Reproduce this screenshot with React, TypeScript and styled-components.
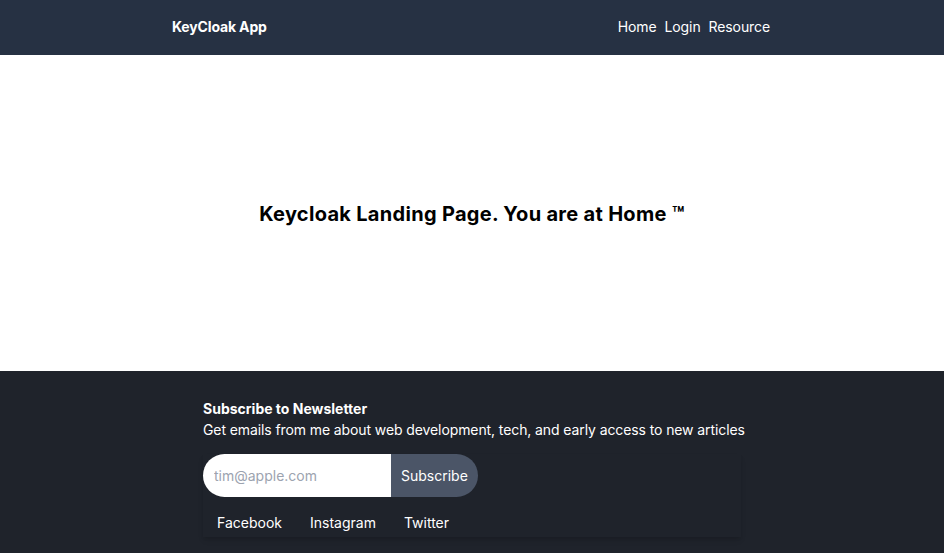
import React, { FC } from 'react';
import styled, { createGlobalStyle } from 'styled-components';

const GlobalStyle = createGlobalStyle`
  html, body {
    margin: 0;
    padding: 0;
    background: #ffffff;
    font-family: Inter, 'Noto Sans', sans-serif;
    -webkit-font-smoothing: antialiased;
  }
  * {
    box-sizing: border-box;
  }
`;

const links = ['Home', 'Login', 'Resource'];
const socials = ['Facebook', 'Instagram', 'Twitter'];

const Header: FC = () => (
  <Nav>
    <NavInner>
      <Brand>KeyCloak App</Brand>
      <NavLinks>
        {links.map((link) => (
          <NavLink href="#" key={link}>
            {link}
          </NavLink>
        ))}
      </NavLinks>
    </NavInner>
  </Nav>
);

const Footer: FC = () => (
  <FooterBar>
    <FooterInner>
      <FooterTitle>Subscribe to Newsletter</FooterTitle>
      <FooterText>Get emails from me about web development, tech, and early access to new articles</FooterText>
      <Card>
        <Form onSubmit={(e) => e.preventDefault()}>
          <EmailInput placeholder="tim@apple.com" type="email" />
          <SubscribeButton type="submit">Subscribe</SubscribeButton>
        </Form>
        <Socials>
          {socials.map((social) => (
            <SocialLink href="#" key={social}>
              {social}
            </SocialLink>
          ))}
        </Socials>
      </Card>
    </FooterInner>
  </FooterBar>
);

const App: FC = () => (
  <Page>
    <GlobalStyle />
    <Header />
    <Main>
      <Title>Keycloak Landing Page. You are at Home ™</Title>
    </Main>
    <Footer />
  </Page>
);

const Page = styled.div`
  display: flex;
  flex-direction: column;
  min-height: 553px;
`;

const Nav = styled.nav`
  background-color: #263143;
  height: 55px;
`;

const NavInner = styled.div`
  align-items: center;
  display: flex;
  height: 100%;
  justify-content: space-between;
  margin: 0 auto;
  max-width: 600px;
  padding-bottom: 3px;
`;

const Brand = styled.span`
  color: #ffffff;
  font-size: 14px;
  font-weight: 700;
  letter-spacing: -0.15px;
`;

const NavLinks = styled.div`
  display: flex;
  gap: 8px;
  padding-right: 2px;
`;

const NavLink = styled.a`
  color: #ffffff;
  font-size: 14px;
  letter-spacing: -0.1px;
  text-decoration: none;
`;

const Main = styled.main`
  align-items: center;
  display: flex;
  height: 316px;
  justify-content: center;
  padding-top: 2px;
`;

const Title = styled.h1`
  color: #000000;
  font-size: 20px;
  font-weight: 700;
  letter-spacing: 0.3px;
  margin: 0;
`;

const FooterBar = styled.footer`
  background-color: #1f232b;
  flex: 1;
  padding-top: 28px;
`;

const FooterInner = styled.div`
  color: #ffffff;
  margin: 0 auto;
  width: 538px;
`;

const FooterTitle = styled.p`
  font-size: 14px;
  font-weight: 700;
  line-height: 20px;
  margin: 0;
`;

const FooterText = styled.p`
  font-size: 14px;
  letter-spacing: -0.1px;
  line-height: 20px;
  margin: 1px 0 0;
  white-space: nowrap;
`;

const Card = styled.div`
  box-shadow: 0 4px 6px -1px rgba(0, 0, 0, 0.12), 0 2px 4px -1px rgba(0, 0, 0, 0.08);
  margin-top: 14px;
  padding-bottom: 4px;
`;

const Form = styled.form`
  display: flex;
`;

const EmailInput = styled.input`
  background: #ffffff;
  border: none;
  border-radius: 22px 0 0 22px;
  color: #374151;
  font-family: inherit;
  font-size: 14px;
  height: 43px;
  outline: none;
  padding: 0 11px;
  width: 188px;

  &::placeholder {
    color: #9ca3af;
  }
`;

const SubscribeButton = styled.button`
  background-color: #4b5567;
  border: none;
  border-radius: 0 22px 22px 0;
  color: #ffffff;
  font-family: inherit;
  font-size: 14px;
  height: 43px;
  padding: 0 11px 0 10px;
  width: 87px;
`;

const Socials = styled.div`
  display: flex;
  margin-top: 16px;
`;

const SocialLink = styled.a`
  color: #ffffff;
  font-size: 14px;
  line-height: 20px;
  padding: 0 14px;
  text-decoration: none;
`;

export default App;
